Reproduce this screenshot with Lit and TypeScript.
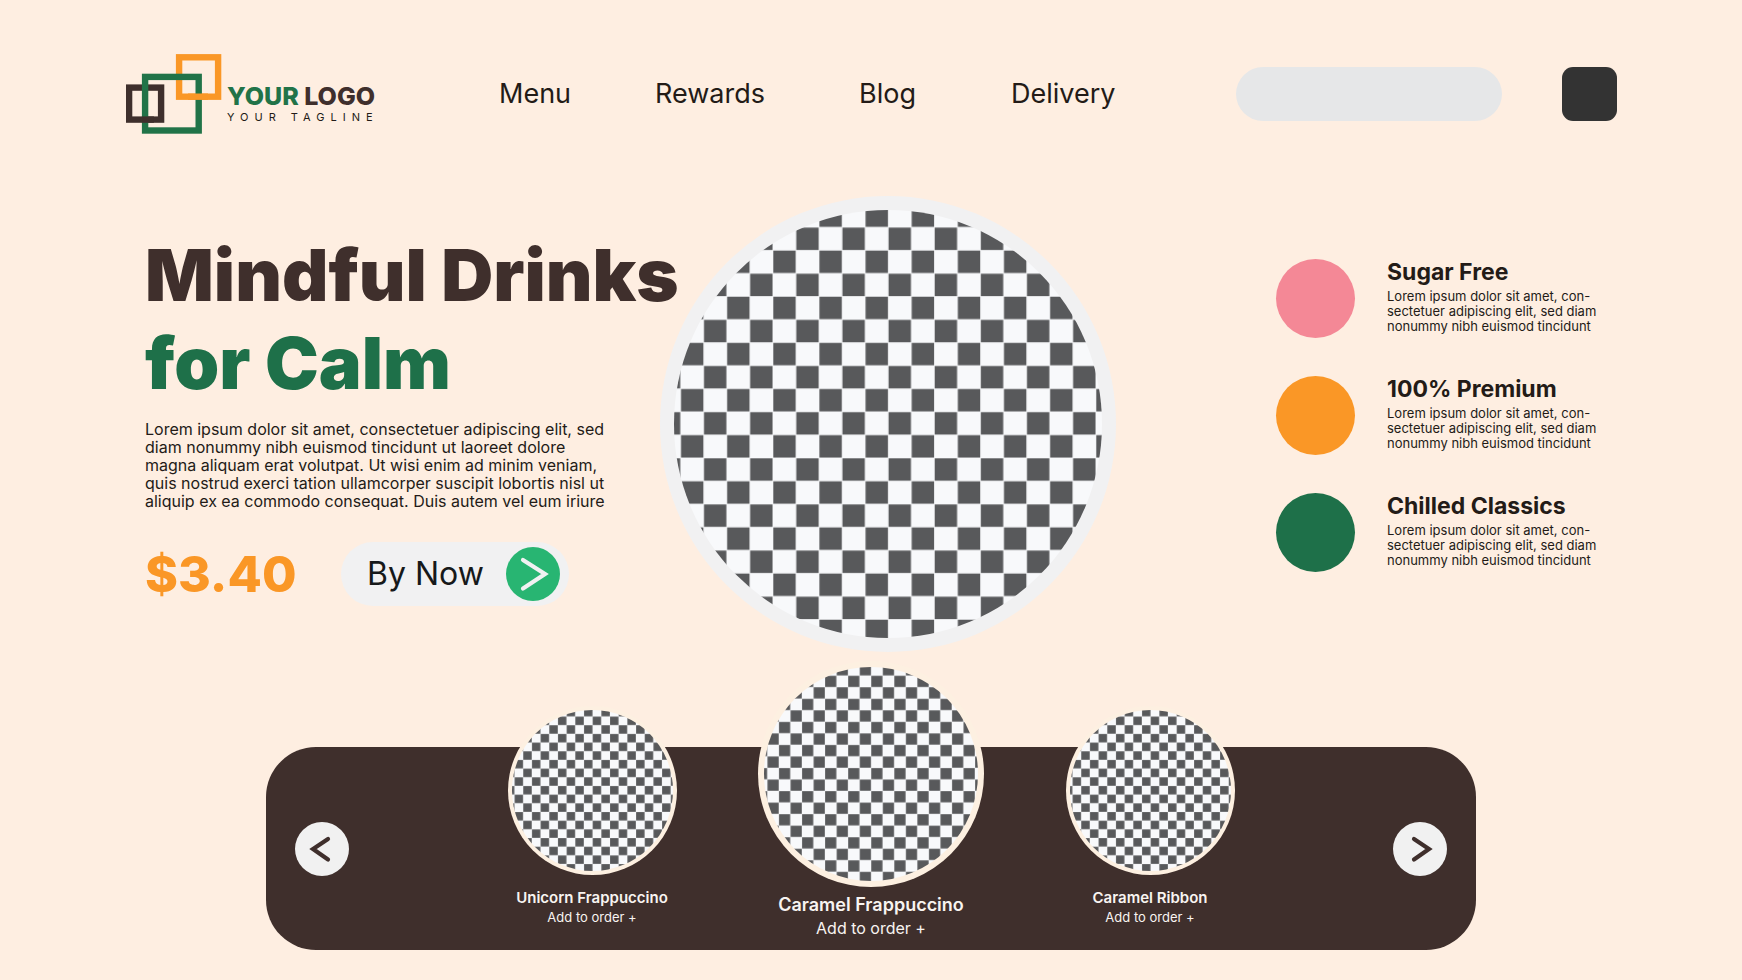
import { LitElement, html, css, svg } from "lit";
import { customElement, property } from "lit/decorators.js";

@customElement("checker-disc")
class CheckerDisc extends LitElement {
  static styles = css`
    :host { display: block; border-radius: 50%; box-sizing: border-box; }
    svg { display: block; width: 100%; height: 100%; }
  `;
  render() {
    return html`<svg viewBox="0 0 428 428" aria-hidden="true">
      <defs>
        <pattern id="squares" x="6.7" y="17.3" width="46.14" height="46.14" patternUnits="userSpaceOnUse">
          <rect width="46.14" height="46.14" fill="#f8f9fb"></rect>
          <rect x="23.3" y="0.3" width="22.4" height="22.4" fill="#58595b"></rect>
          <rect x="0.3" y="23.3" width="22.4" height="22.4" fill="#58595b"></rect>
        </pattern>
      </defs>
      <circle cx="214" cy="214" r="214" fill="url(#squares)"></circle>
    </svg>`;
  }
}

@customElement("feature-item")
class FeatureItem extends LitElement {
  @property() heading = "";
  @property() tone = "pink";
  static styles = css`
    :host { display: flex; gap: 32px; }
    .dot { flex: none; width: 79px; height: 79px; border-radius: 50%; }
    .pink { background: #f48896; }
    .orange { background: #fa9726; }
    .green { background: #1e7049; }
    h2 { margin: 0 0 4px; font-size: 23px; line-height: 26px; font-weight: 700; }
    p { margin: 0; font-size: 13px; line-height: 15px; white-space: nowrap; }
  `;
  render() {
    return html`<div class="dot ${this.tone}"></div>
      <div>
        <h2>${this.heading}</h2>
        <p>Lorem ipsum dolor sit amet, con-<br />sectetuer adipiscing elit, sed diam<br />nonummy nibh euismod tincidunt</p>
      </div>`;
  }
}

@customElement("product-card")
class ProductCard extends LitElement {
  @property() name = "";
  @property({ type: Boolean, reflect: true }) featured = false;
  static styles = css`
    :host { display: flex; flex-direction: column; align-items: center; margin-top: -41px; color: #f8f4f1; }
    checker-disc { width: 169px; height: 169px; padding: 4px; background: #fdf0e1; margin-bottom: 13px; }
    h3 { margin: 0; font-size: 15px; line-height: 20px; font-weight: 600; white-space: nowrap; }
    button { border: 0; padding: 0; background: none; color: inherit; font: inherit; font-size: 13px; line-height: 18px; cursor: pointer; }
    :host([featured]) { margin-top: -86px; }
    :host([featured]) checker-disc { width: 226px; height: 226px; padding: 6px; margin-bottom: 6px; }
    :host([featured]) h3 { font-size: 18px; line-height: 24px; }
    :host([featured]) button { font-size: 16px; line-height: 22px; }
  `;
  render() {
    return html`<checker-disc></checker-disc>
      <h3>${this.name}</h3>
      <button type="button">Add to order +</button>`;
  }
}

const arrow = (points: string) => svg`<polyline points=${points} fill="none" stroke="currentColor"
  stroke-width="4.2" stroke-linecap="round" stroke-linejoin="miter"></polyline>`;

@customElement("app-root")
class AppRoot extends LitElement {
  static styles = css`
    :host {
      display: block; box-sizing: border-box; min-height: 100vh; padding: 54px 0 30px;
      background: #feeee1; color: #231b17; font-family: Inter, "Open Sans", sans-serif;
    }
    svg { display: block; }
    button { border: 0; padding: 0; font: inherit; color: inherit; cursor: pointer; }
    header { display: flex; align-items: center; padding: 0 125px 0 126px; }
    .logo { display: flex; gap: 5px; flex: none; width: 373px; text-decoration: none; color: #3f2f2c; }
    .words { padding-top: 28px; }
    .brand { font-size: 25px; line-height: 28px; font-weight: 800; }
    .brand span { color: #217348; }
    .tag { font-size: 11px; line-height: 14px; letter-spacing: 6px; white-space: nowrap; color: #231b17; }
    nav { display: grid; grid-template-columns: 156px 204px 152px auto; font-size: 27px; line-height: 32px; }
    nav a { color: inherit; text-decoration: none; }
    .search {
      box-sizing: border-box; width: 266px; height: 54px; margin-left: auto; padding: 0 24px;
      border: 0; border-radius: 27px; background: #e6e7e8; font: inherit; font-size: 18px;
    }
    .menu { width: 55px; height: 54px; margin-left: 60px; border-radius: 11px; background: #333333; }
    .hero {
      display: grid; grid-template-columns: 1fr 456px 1fr; align-items: start;
      margin-top: 62px; padding: 0 111px 0 145px;
    }
    .copy { position: relative; z-index: 1; padding-top: 35px; min-width: 0; }
    h1 { margin: 0; font-size: 72px; line-height: 88px; font-weight: 900; color: #3f2f2c; white-space: nowrap; }
    h1 span { color: #1e7049; }
    .lead { margin: 13px 0 32px; font-size: 16px; line-height: 18px; white-space: nowrap; }
    .buy { display: grid; grid-template-columns: 196px auto; justify-content: start; align-items: center; }
    .price { font-size: 50px; line-height: 64px; font-weight: 800; color: #fa9726; }
    .now {
      display: flex; align-items: center; gap: 22px; padding: 5px 9px 5px 26px;
      border-radius: 32px; background: #f1f1f2; color: #16191a; font-size: 32px; line-height: 40px;
    }
    .go { color: #f1f1f2; background: #28b572; border-radius: 50%; }
    .big { height: 456px; padding: 14px; background: #f1f1f2; }
    .features { display: grid; gap: 38px; margin-left: 160px; padding-top: 63px; }
    .shelf {
      display: flex; justify-content: space-between; align-items: center;
      margin: 95px 266px 0; padding: 0 29px 11px; border-radius: 50px; background: #3f2f2c;
    }
    .products { display: grid; grid-template-columns: repeat(3, 279px); align-items: start; }
    .round { flex: none; margin-top: 11px; border-radius: 50%; background: #f1f1f1; color: #3f2f2c; }
  `;

  render() {
    return html`
      <header>
        <a class="logo" href="#">
          <svg width="96" height="80" viewBox="0 0 96 80" fill="none" stroke-width="6.4" aria-hidden="true">
            <rect x="3.1" y="33.6" width="32" height="32" stroke="#3f2f2c"></rect>
            <rect x="53.1" y="3.3" width="39" height="39.4" stroke="#fa9726"></rect>
            <rect x="19.1" y="22.9" width="53.6" height="53.6" stroke="#217348"></rect>
            <path d="M15.9 65.6h12" stroke="#3f2f2c"></path>
            <path d="M62 42.7h20" stroke="#fa9726"></path>
          </svg>
          <div class="words">
            <div class="brand"><span>YOUR</span> LOGO</div>
            <div class="tag">YOUR TAGLINE</div>
          </div>
        </a>
        <nav>
          <a href="#">Menu</a><a href="#">Rewards</a><a href="#">Blog</a><a href="#">Delivery</a>
        </nav>
        <input class="search" type="search" aria-label="Search" />
        <button class="menu" type="button" aria-label="Open menu"></button>
      </header>

      <main>
        <section class="hero">
          <div class="copy">
            <h1>Mindful Drinks<br /><span>for Calm</span></h1>
            <p class="lead">Lorem ipsum dolor sit amet, consectetuer adipiscing elit, sed<br />diam nonummy nibh euismod tincidunt ut laoreet dolore<br />magna aliquam erat volutpat. Ut wisi enim ad minim veniam,<br />quis nostrud exerci tation ullamcorper suscipit lobortis nisl ut<br />aliquip ex ea commodo consequat. Duis autem vel eum iriure</p>
            <div class="buy">
              <div class="price">$3.40</div>
              <button class="now" type="button">
                By Now
                <svg class="go" width="54" height="54" viewBox="0 0 54 54" aria-hidden="true">${arrow("17,13 39,27 17,41.5")}</svg>
              </button>
            </div>
          </div>
          <checker-disc class="big"></checker-disc>
          <div class="features">
            <feature-item heading="Sugar Free" tone="pink"></feature-item>
            <feature-item heading="100% Premium" tone="orange"></feature-item>
            <feature-item heading="Chilled Classics" tone="green"></feature-item>
          </div>
        </section>

        <section class="shelf" aria-label="Drinks">
          <button class="round" type="button" aria-label="Previous">
            <svg width="54" height="54" viewBox="0 0 54 54">${arrow("33,17 18,27 33,37.5")}</svg>
          </button>
          <div class="products">
            <product-card name="Unicorn Frappuccino"></product-card>
            <product-card name="Caramel Frappuccino" featured></product-card>
            <product-card name="Caramel Ribbon"></product-card>
          </div>
          <button class="round" type="button" aria-label="Next">
            <svg width="54" height="54" viewBox="0 0 54 54">${arrow("21,17 36,27 21,37.5")}</svg>
          </button>
        </section>
      </main>
    `;
  }
}
